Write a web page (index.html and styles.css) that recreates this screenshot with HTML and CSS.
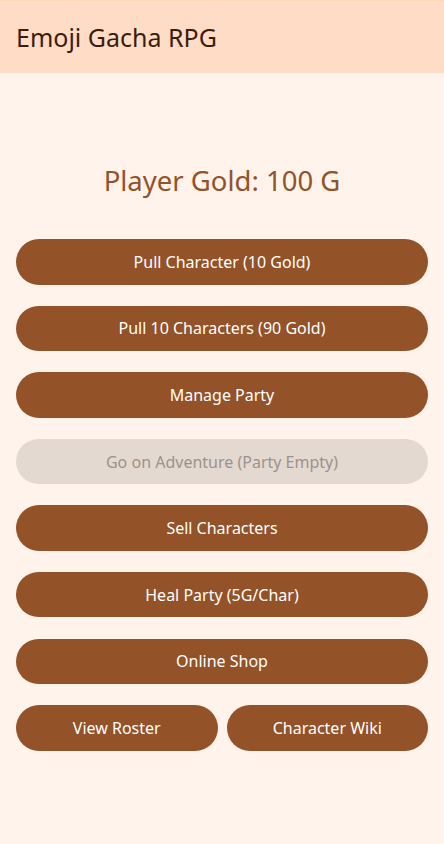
FILE: index.html
```html
<!DOCTYPE html>
<html lang="en">
<head>
<meta charset="utf-8">
<title>Emoji Gacha RPG</title>
<link rel="stylesheet" href="styles.css">
</head>
<body>
<header class="app-bar">
  <h1 class="app-title">Emoji Gacha RPG</h1>
</header>
<main class="content">
  <p class="gold">Player Gold: 100 G</p>
  <div class="actions">
    <button class="btn">Pull Character (10 Gold)</button>
    <button class="btn">Pull 10 Characters (90 Gold)</button>
    <button class="btn">Manage Party</button>
    <button class="btn btn-disabled" disabled>Go on Adventure (Party Empty)</button>
    <button class="btn">Sell Characters</button>
    <button class="btn">Heal Party (5G/Char)</button>
    <button class="btn">Online Shop</button>
    <div class="row">
      <button class="btn">View Roster</button>
      <button class="btn">Character Wiki</button>
    </div>
  </div>
</main>
</body>
</html>
```
FILE: styles.css
```css
* { box-sizing: border-box; }
html, body {
  margin: 0;
  padding: 0;
  height: 100%;
}
body {
  background: #fff3eb;
  font-family: "Noto Sans", "Open Sans", sans-serif;
}
.app-bar {
  height: 73px;
  background: #ffdcc6;
  border-top: 1px solid #ffd6b8;
  display: flex;
  align-items: center;
  padding: 0 16px;
}
.app-title {
  margin: 0;
  font-size: 25px;
  font-weight: 400;
  color: #3b1d0c;
  letter-spacing: 0;
}
.content {
  padding: 0 16px;
}
.gold {
  margin: 0;
  padding-top: 88px;
  height: 166px;
  text-align: center;
  font-size: 27.5px;
  line-height: 40px;
  color: #935227;
}
.actions {
  display: flex;
  flex-direction: column;
  gap: 21.1px;
}
.btn {
  height: 45.5px;
  border: none;
  border-radius: 23px;
  background: #935227;
  color: #ffffff;
  font-family: inherit;
  font-size: 16px;
  padding: 0 16px;
  width: 100%;
}
.btn-disabled {
  background: #e3d9d0;
  color: #9e928a;
}
.row {
  display: flex;
  gap: 9px;
}
.row .btn {
  flex: 1;
}
```
